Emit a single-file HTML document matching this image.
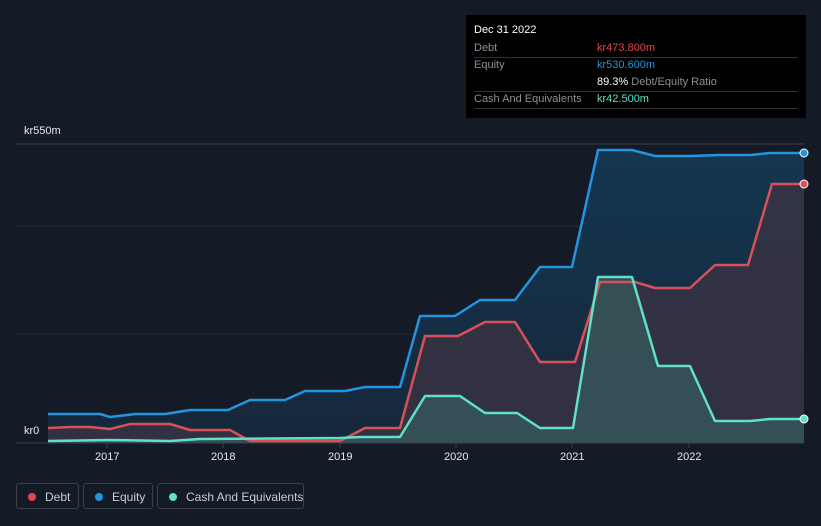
<!DOCTYPE html>
<html><head><style>
body{margin:0;background:#151b26;font-family:"Liberation Sans",sans-serif;}
.wrap{position:relative;width:821px;height:526px;overflow:hidden;background:#151b26}
.tip{position:absolute;left:466px;top:15px;width:340px;height:103px;background:#000;font-size:11px}
.tip .r{position:absolute;left:8px;right:8px;border-bottom:1px solid #333;height:17px;line-height:17px;color:#8a8f98;white-space:nowrap}
.tip .v{position:absolute;left:123px}
.leg{position:absolute;top:483px;height:26px;border:1px solid #3a404b;border-radius:3px;color:#c9ccd2;font-size:12px;line-height:26px;box-sizing:border-box;white-space:nowrap}
.leg i{position:absolute;left:11px;top:9px;width:8px;height:8px;border-radius:50%}
.leg span{position:absolute;left:28px}
.ax{position:absolute;color:#e6e8ec;font-size:11px}
</style></head><body><div class="wrap">
<svg width="821" height="526" style="position:absolute;left:0;top:0">
<defs>
<linearGradient id="ge" x1="0" y1="0" x2="0" y2="1"><stop offset="0" stop-color="#143650"/><stop offset="1" stop-color="#16283a"/></linearGradient>
</defs>
<line x1="16" y1="144" x2="804" y2="144" stroke="#3a404b"/>
<line x1="16" y1="226" x2="804" y2="226" stroke="#252b36"/>
<line x1="16" y1="334" x2="804" y2="334" stroke="#252b36"/>
<path d="M48,414 L100,414 110,417 135,414 165,414 190,410 228,410 250,400 285,400 305,391 345,391 365,387 400,387 420,316 455,316 480,300 515,300 540,267 572,267 598,150 632,150 655,156 690,156 720,155 750,155 770,153 804,153 L804,443 L48,443Z" fill="url(#ge)"/>
<path d="M48,428 L70,427 90,427 110,429 130,424 170,424 190,430 230,430 250,441 340,441 365,428 400,428 425,336 458,336 485,322 515,322 540,362 575,362 600,282 635,282 655,288 690,288 715,265 748,265 772,184 804,184 L804,443 L48,443Z" fill="#3a3344" opacity="0.8"/>
<path d="M48,441 L110,440 170,441 200,439 340,438 360,437 400,437 425,396 460,396 485,413 517,413 540,428 573,428 598,277 632,277 658,366 690,366 715,421 750,421 770,419 804,419 L804,443 L48,443Z" fill="#35575a" opacity="0.8"/>
<path d="M48,414 L100,414 110,417 135,414 165,414 190,410 228,410 250,400 285,400 305,391 345,391 365,387 400,387 420,316 455,316 480,300 515,300 540,267 572,267 598,150 632,150 655,156 690,156 720,155 750,155 770,153 804,153" fill="none" stroke="#2394df" stroke-width="2.5" stroke-linejoin="round"/>
<path d="M48,428 L70,427 90,427 110,429 130,424 170,424 190,430 230,430 250,441 340,441 365,428 400,428 425,336 458,336 485,322 515,322 540,362 575,362 600,282 635,282 655,288 690,288 715,265 748,265 772,184 804,184" fill="none" stroke="#d9505a" stroke-width="2.5" stroke-linejoin="round"/>
<path d="M48,441 L110,440 170,441 200,439 340,438 360,437 400,437 425,396 460,396 485,413 517,413 540,428 573,428 598,277 632,277 658,366 690,366 715,421 750,421 770,419 804,419" fill="none" stroke="#5fe0c8" stroke-width="2.5" stroke-linejoin="round"/>
<line x1="16" y1="443" x2="804" y2="443" stroke="#3a404b"/>
<g stroke="#3a404b"><line x1="107" y1="443" x2="107" y2="448"/><line x1="223" y1="443" x2="223" y2="448"/><line x1="340" y1="443" x2="340" y2="448"/><line x1="456" y1="443" x2="456" y2="448"/><line x1="572" y1="443" x2="572" y2="448"/><line x1="689" y1="443" x2="689" y2="448"/></g>
<circle cx="804" cy="153" r="4" fill="#2394df" stroke="#fff" stroke-width="1"/>
<circle cx="804" cy="184" r="4" fill="#d9505a" stroke="#fff" stroke-width="1"/>
<circle cx="804" cy="419" r="4" fill="#5fe0c8" stroke="#fff" stroke-width="1"/>
</svg>
<div class="ax" style="left:24px;top:125px">kr550m</div>
<div class="ax" style="left:18px;top:425px;background:#151b26;padding:0 6px">kr0</div>
<div class="ax" style="left:95px;top:451px">2017</div>
<div class="ax" style="left:211px;top:451px">2018</div>
<div class="ax" style="left:328px;top:451px">2019</div>
<div class="ax" style="left:444px;top:451px">2020</div>
<div class="ax" style="left:560px;top:451px">2021</div>
<div class="ax" style="left:677px;top:451px">2022</div>
<div class="tip">
<div style="position:absolute;left:8px;top:9px;color:#fff;font-size:11px">Dec 31 2022</div>
<div class="r" style="top:25px">Debt<span class="v" style="color:#e4464e">kr473.800m</span></div>
<div class="r" style="top:42px;border:none">Equity<span class="v" style="color:#2394df">kr530.600m</span></div>
<div class="r" style="top:59px"><span class="v" style="color:#8a8f98"><b style="color:#fff;font-weight:normal">89.3%</b> Debt/Equity Ratio</span></div>
<div class="r" style="top:76px">Cash And Equivalents<span class="v" style="color:#5fe0c8">kr42.500m</span></div>
</div>
<div class="leg" style="left:16px;width:63px"><i style="background:#e4464e"></i><span>Debt</span></div>
<div class="leg" style="left:83px;width:70px"><i style="background:#2394df"></i><span>Equity</span></div>
<div class="leg" style="left:157px;width:147px"><i style="background:#5fe0c8"></i><span>Cash And Equivalents</span></div>
</div></body></html>
